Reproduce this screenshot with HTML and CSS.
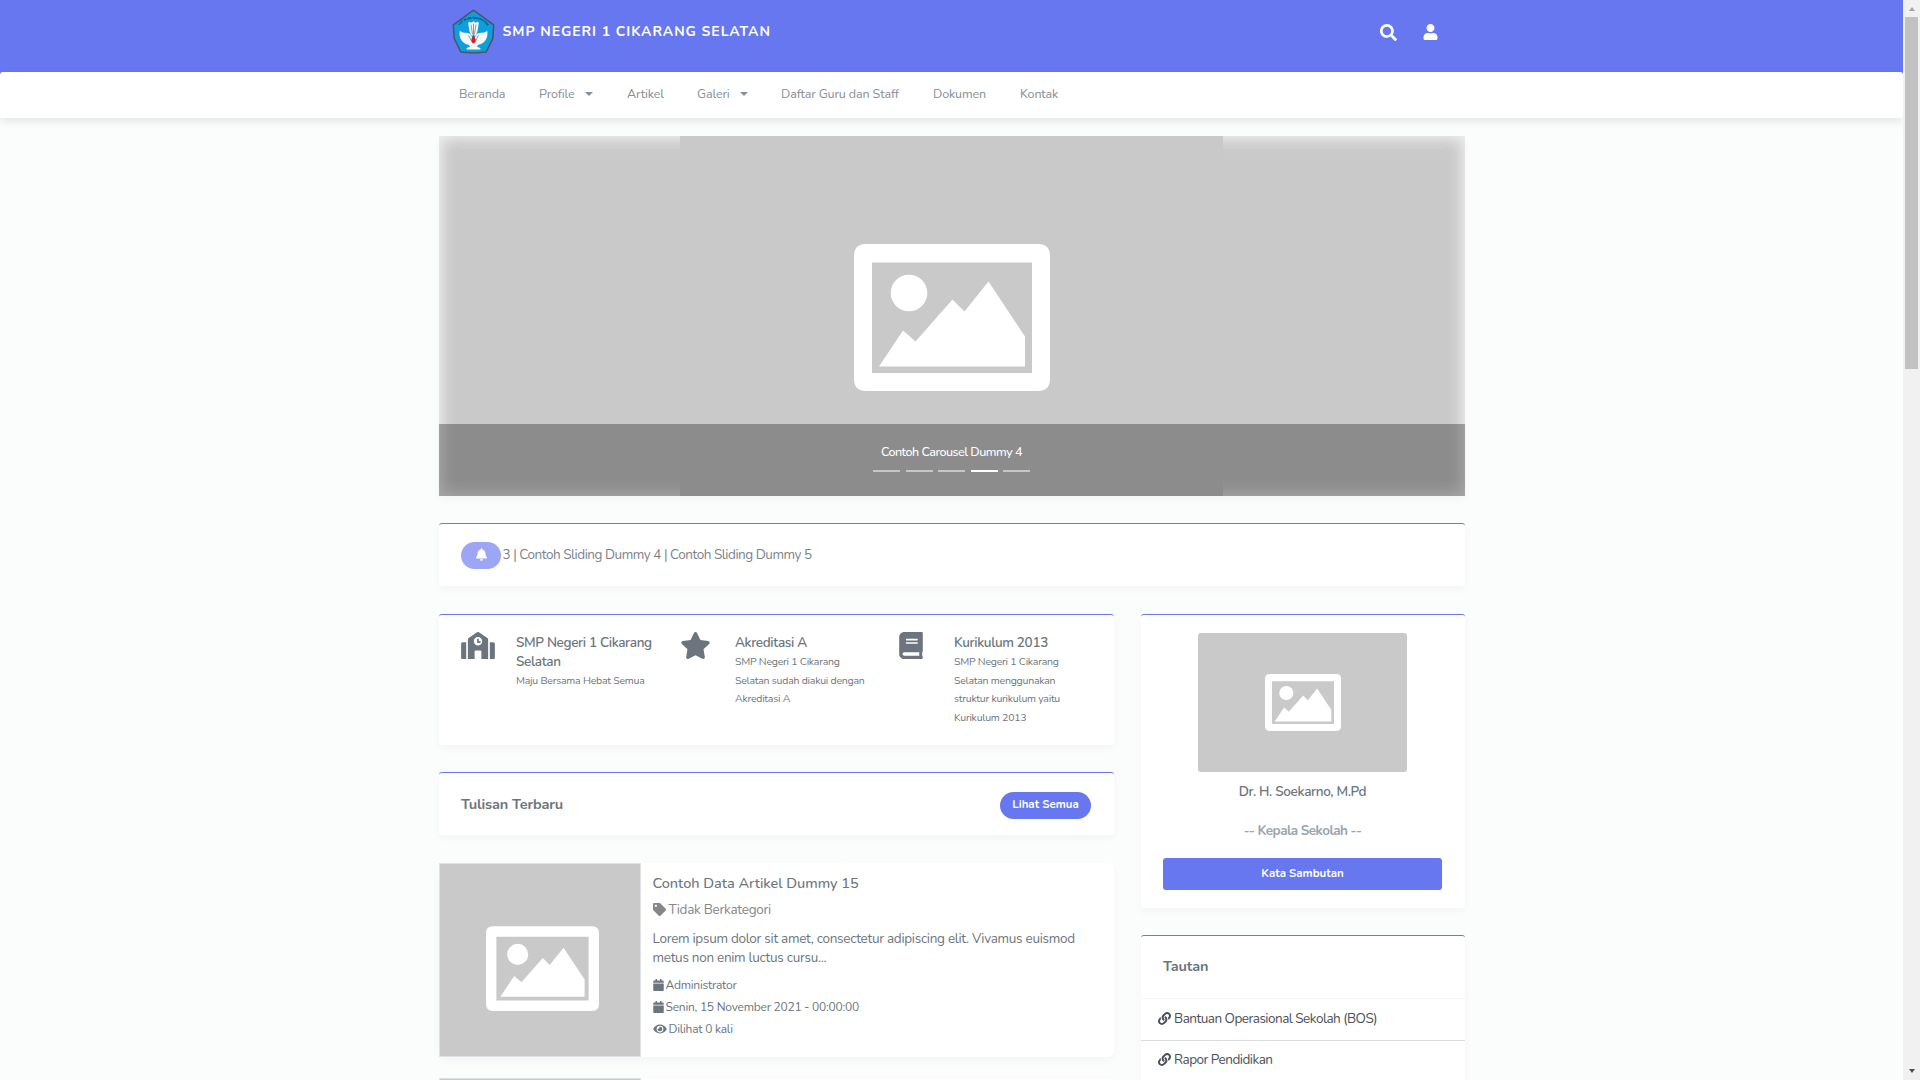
FILE: index.html
```html
<!DOCTYPE html>
<html lang="id">
<head>
<meta charset="utf-8">
<title>SMP Negeri 1 Cikarang Selatan</title>
<link rel="stylesheet" href="styles.css">
</head>
<body>
<svg class="defs" width="0" height="0">
  <symbol id="placeholder" viewBox="0 0 196 147">
    <path fill="#fff" fill-rule="evenodd" d="M12 0H184Q196 0 196 12V135Q196 147 184 147H12Q0 147 0 135V12Q0 0 12 0ZM18 18.500V129H178V18.500Z"/>
    <circle cx="55" cy="49" r="18.300" fill="#fff"/>
    <path fill="#fff" d="M25 122.500 49 86.500 61.500 97.500 98.500 55.500 110.500 67.500 134.500 37.500 171 92.500V122.500Z"/>
  </symbol>
  <symbol id="calendar" viewBox="0 0 448 512"><path d="M12 192h424c6.600 0 12 5.400 12 12v260c0 26.500-21.500 48-48 48H48c-26.500 0-48-21.500-48-48V204c0-6.600 5.400-12 12-12zm436-44v-36c0-26.500-21.500-48-48-48h-48V12c0-6.600-5.400-12-12-12h-40c-6.600 0-12 5.400-12 12v52H160V12c0-6.600-5.400-12-12-12h-40c-6.600 0-12 5.400-12 12v52H48C21.500 64 0 85.500 0 112v36c0 6.600 5.400 12 12 12h424c6.600 0 12-5.400 12-12z"/></symbol>
  <symbol id="link" viewBox="0 0 512 512"><path d="M326.612 185.391c59.747 59.809 58.927 155.698.36 214.590-.11.12-.24.25-.36.37l-67.200 67.200c-59.270 59.270-155.699 59.262-214.960 0-59.270-59.260-59.270-155.700 0-214.960l37.106-37.106c9.840-9.840 26.786-3.300 27.294 10.606.648 17.722 3.826 35.527 9.690 52.721 1.986 5.822.567 12.262-3.783 16.612l-13.087 13.087c-28.026 28.026-28.905 73.660-1.155 101.960 28.024 28.579 74.086 28.749 102.325.51l67.200-67.190c28.191-28.191 28.073-73.757 0-101.830-3.701-3.694-7.429-6.564-10.341-8.569a16.037 16.037 0 0 1-6.947-12.606c-.396-10.567 3.348-21.456 11.698-29.806l21.054-21.055c5.521-5.521 14.182-6.199 20.584-1.731a152.482 152.482 0 0 1 20.522 17.197zM467.547 44.449c-59.261-59.262-155.690-59.270-214.960 0l-67.200 67.200c-.12.12-.25.25-.36.37-58.566 58.892-59.387 154.781.36 214.590a152.454 152.454 0 0 0 20.521 17.196c6.402 4.468 15.064 3.789 20.584-1.731l21.054-21.055c8.350-8.350 12.094-19.239 11.698-29.806a16.037 16.037 0 0 0-6.947-12.606c-2.912-2.005-6.640-4.875-10.341-8.569-28.073-28.073-28.191-73.639 0-101.830l67.200-67.190c28.239-28.239 74.300-28.069 102.325.51 27.750 28.300 26.872 73.934-1.155 101.960l-13.087 13.087c-4.350 4.350-5.769 10.790-3.783 16.612 5.864 17.194 9.042 34.999 9.690 52.721.509 13.906 17.454 20.446 27.294 10.606l37.106-37.106c59.271-59.259 59.271-155.699.001-214.959z"/></symbol>
</svg>
<div class="window">
<div class="page">
  <header class="topbar">
    <div class="container topbar-inner">
      <svg class="logo" viewBox="0 0 44 46">
        <path d="M22 1.200 42.600 16.200 41.800 30 35 44 22 45 9 44 2.200 30 1.400 16.200Z" fill="#0c9fe0" stroke="#4a5568" stroke-width="1.600" stroke-linejoin="round"/>
        <path id="arc" d="M6.500 20.500C10 6.500 34 6.500 37.500 20.500" fill="none"/>
        <text class="logo-text"><textPath href="#arc" startOffset="50%" text-anchor="middle">TUT WURI HANDAYANI</textPath></text>
        <path fill="#f4f8f8" d="M16.500 14 18 13 19.500 14 22 12.500 24.500 14 26 13 27.500 14 26 23 24.500 27H19.500L18 23ZM8 22C10 25 15 24 18 25L22 31 26 25C29 24 34 25 36 22 37.500 30 33 36 27 36.500L25.500 38.500 29 40V41.500H15V40L18.500 38.500 17 36.500C11 36 6.500 30 8 22Z"/>
        <path d="M22 15V28M19.500 16 21 26M24.500 16 23 26M17 27 20 33M27 27 24 33" stroke="#555" stroke-width=".6" fill="none"/>
        <path fill="#e01b24" d="M22 27C25 30.500 25 34.500 22 35 19 34.500 19 30.500 22 27Z"/>
      </svg>
      <span class="brand">SMP NEGERI 1 CIKARANG SELATAN</span>
      <div class="tools">
        <svg class="ico-search" viewBox="0 0 512 512"><path d="M505 442.700L405.300 343c-4.500-4.500-10.600-7-17-7H372c27.600-35.300 44-79.700 44-128C416 93.100 322.900 0 208 0S0 93.100 0 208s93.100 208 208 208c48.300 0 92.700-16.400 128-44v16.300c0 6.400 2.500 12.500 7 17l99.700 99.700c9.400 9.400 24.600 9.400 33.900 0l28.300-28.300c9.400-9.400 9.400-24.600.1-34zM208 336c-70.700 0-128-57.200-128-128 0-70.700 57.200-128 128-128 70.700 0 128 57.200 128 128 0 70.700-57.200 128-128 128z"/></svg>
        <svg class="ico-user" viewBox="0 0 448 512"><path d="M224 256c70.700 0 128-57.300 128-128S294.700 0 224 0 96 57.300 96 128s57.300 128 128 128zm89.600 32h-16.700c-22.200 10.200-46.900 16-72.900 16s-50.600-5.800-72.900-16h-16.700C60.200 288 0 348.200 0 422.400V464c0 26.500 21.500 48 48 48h352c26.500 0 48-21.500 48-48v-41.600c0-74.200-60.200-134.400-134.400-134.400z"/></svg>
      </div>
    </div>
  </header>
  <nav class="navbar">
    <div class="container nav-list">
      <a class="nav-1">Beranda</a>
      <a class="nav-2">Profile<i class="caret"></i></a>
      <a class="nav-3">Artikel</a>
      <a class="nav-4">Galeri<i class="caret"></i></a>
      <a class="nav-5">Daftar Guru dan Staff</a>
      <a class="nav-6">Dokumen</a>
      <a class="nav-7">Kontak</a>
    </div>
  </nav>
  <main class="container content">
    <section class="carousel">
      <div class="slide"><svg class="slide-icon"><use href="#placeholder"/></svg></div>
      <div class="caption">
        <span class="caption-text">Contoh Carousel Dummy 4</span>
        <div class="dots"><i></i><i></i><i></i><i class="on"></i><i></i></div>
      </div>
    </section>
    <section class="card ticker">
      <span class="bell"><svg viewBox="0 0 448 512"><path d="M224 512c35.320 0 63.970-28.650 63.970-64H160.030c0 35.350 28.650 64 63.970 64zm215.390-149.710c-19.320-20.760-55.470-51.990-55.470-154.290 0-77.700-54.480-139.900-127.940-155.160V32c0-17.670-14.320-32-31.980-32s-31.980 14.330-31.980 32v20.840C118.560 68.100 64.080 130.300 64.080 208c0 102.300-36.150 133.530-55.470 154.290-6 6.450-8.660 14.160-8.610 21.710.11 16.400 12.980 32 32.100 32h383.800c19.120 0 32-15.600 32.100-32 .05-7.550-2.610-15.270-8.610-21.710z"/></svg></span>
      <span class="ticker-text">3 | Contoh Sliding Dummy 4 | Contoh Sliding Dummy 5</span>
    </section>
    <div class="columns">
      <div class="main-col">
        <section class="card info">
          <div class="feature">
            <svg class="feature-icon" viewBox="0 0 640 512"><path d="M0 224v272c0 8.840 7.160 16 16 16h80V192H32c-17.670 0-32 14.330-32 32zm360-48h-24v-40c0-4.420-3.580-8-8-8h-16c-4.420 0-8 3.580-8 8v64c0 4.420 3.580 8 8 8h48c4.420 0 8-3.580 8-8v-16c0-4.420-3.580-8-8-8zm137.750-63.960l-160-106.670a32.020 32.020 0 0 0-35.500 0l-160 106.670A32.002 32.002 0 0 0 128 138.660V512h128V368c0-8.840 7.160-16 16-16h96c8.840 0 16 7.160 16 16v144h128V138.670c0-10.700-5.350-20.690-14.250-26.630zM320 256c-44.180 0-80-35.820-80-80s35.820-80 80-80 80 35.820 80 80-35.820 80-80 80zm288-64h-64v320h80c8.840 0 16-7.160 16-16V224c0-17.670-14.330-32-32-32z"/></svg>
            <div class="feature-body">
              <h3>SMP Negeri 1 Cikarang<br>Selatan</h3>
              <p>Maju Bersama Hebat Semua</p>
            </div>
          </div>
          <div class="feature">
            <svg class="feature-icon star" viewBox="0 0 576 512"><path d="M259.300 17.800L194 150.200 47.900 171.500c-26.200 3.800-36.700 36.100-17.700 54.600l105.700 103-25 145.500c-4.500 26.300 23.200 46 46.400 33.700L288 439.600l130.700 68.700c23.200 12.200 50.900-7.400 46.400-33.700l-25-145.500 105.700-103c19-18.500 8.500-50.800-17.700-54.600L382 150.200 316.700 17.800c-11.700-23.600-45.600-23.900-57.400 0z"/></svg>
            <div class="feature-body">
              <h3>Akreditasi A</h3>
              <p>SMP Negeri 1 Cikarang<br>Selatan sudah diakui dengan<br>Akreditasi A</p>
            </div>
          </div>
          <div class="feature">
            <svg class="feature-icon book" viewBox="0 0 448 512"><path d="M448 360V24c0-13.300-10.700-24-24-24H96C43 0 0 43 0 96v320c0 53 43 96 96 96h328c13.300 0 24-10.700 24-24v-16c0-7.500-3.500-14.300-8.900-18.700-4.200-15.400-4.200-59.300 0-74.700 5.400-4.300 8.900-11.100 8.900-18.600zM128 134c0-3.300 2.700-6 6-6h212c3.300 0 6 2.700 6 6v20c0 3.300-2.700 6-6 6H134c-3.300 0-6-2.700-6-6v-20zm0 64c0-3.300 2.700-6 6-6h212c3.300 0 6 2.700 6 6v20c0 3.300-2.700 6-6 6H134c-3.300 0-6-2.700-6-6v-20zm253.400 250H96c-17.700 0-32-14.300-32-32 0-17.600 14.400-32 32-32h285.400c-1.900 17.100-1.900 46.900 0 64z"/></svg>
            <div class="feature-body">
              <h3>Kurikulum 2013</h3>
              <p>SMP Negeri 1 Cikarang<br>Selatan menggunakan<br>struktur kurikulum yaitu<br>Kurikulum 2013</p>
            </div>
          </div>
        </section>
        <section class="card heading">
          <h2>Tulisan Terbaru</h2>
          <a class="pill">Lihat Semua</a>
        </section>
        <article class="post">
          <div class="thumb"><svg class="thumb-icon"><use href="#placeholder"/></svg></div>
          <div class="post-body">
            <h3 class="post-title">Contoh Data Artikel Dummy 15</h3>
            <div class="post-cat"><svg viewBox="0 0 512 512"><path d="M0 252.118V48C0 21.490 21.490 0 48 0h204.118a48 48 0 0 1 33.941 14.059l211.882 211.882c18.745 18.745 18.745 49.137 0 67.882L293.823 497.941c-18.745 18.745-49.137 18.745-67.882 0L14.059 286.059A48 48 0 0 1 0 252.118zM112 64c-26.510 0-48 21.490-48 48s21.490 48 48 48 48-21.490 48-48-21.490-48-48-48z"/></svg>Tidak Berkategori</div>
            <p class="post-text">Lorem ipsum dolor sit amet, consectetur adipiscing elit. Vivamus euismod<br>metus non enim luctus cursu...</p>
            <div class="meta"><svg class="cal"><use href="#calendar"/></svg>Administrator</div>
            <div class="meta"><svg class="cal"><use href="#calendar"/></svg>Senin, 15 November 2021 - 00:00:00</div>
            <div class="meta"><svg class="eye" viewBox="0 0 576 512"><path d="M572.520 241.400C518.290 135.590 410.930 64 288 64S57.680 135.640 3.480 241.410a32.350 32.350 0 0 0 0 29.190C57.710 376.410 165.070 448 288 448s230.320-71.640 284.520-177.410a32.350 32.350 0 0 0 0-29.190zM288 400a144 144 0 1 1 144-144 143.930 143.930 0 0 1-144 144zm0-240a95.310 95.310 0 0 0-25.310 3.790 47.850 47.850 0 0 1-66.900 66.900A95.780 95.780 0 1 0 288 160z"/></svg>Dilihat 0 kali</div>
          </div>
        </article>
        <article class="post next"><div class="thumb"></div></article>
      </div>
      <aside class="side-col">
        <section class="card profile">
          <div class="portrait"><svg class="portrait-icon"><use href="#placeholder"/></svg></div>
          <h3>Dr. H. Soekarno, M.Pd</h3>
          <h4>-- Kepala Sekolah --</h4>
          <a class="button">Kata Sambutan</a>
        </section>
        <section class="card links">
          <h2>Tautan</h2>
          <a class="link"><svg><use href="#link"/></svg>Bantuan Operasional Sekolah (BOS)</a>
          <a class="link"><svg><use href="#link"/></svg>Rapor Pendidikan</a>
        </section>
      </aside>
    </div>
  </main>
</div>
<div class="scrollbar"><i class="up"></i><i class="grip"></i><i class="down"></i></div>
</div>
</body>
</html>
```
FILE: styles.css
```css
* { box-sizing: border-box; }
html, body { margin: 0; height: 1080px; overflow: hidden; }
body { font-family: Nunito, "Lato", sans-serif; font-size: 13.5px; color: #6c757d; background: #fafdfb; }
h2, h3, h4, p { margin: 0; }
svg { display: block; flex: none; fill: currentColor; }
.defs { position: absolute; }
.window { display: flex; height: 1080px; }
.page { width: 1903px; height: 1080px; overflow: hidden; }
.container { width: 1026px; margin-left: 439px; }

/* header */
.topbar { height: 75px; margin-bottom: -3px; background: #6777ef; color: #fff; }
.topbar-inner { display: flex; padding: 9px 27px 0 13px; }
.logo { width: 43px; height: 45px; overflow: visible; }
.logo-text { font-size: 2.9px; font-weight: 700; fill: #123; }
.brand { margin-left: 7.5px; padding-top: 13px; font-size: 14px; font-weight: 700; line-height: 20px; letter-spacing: .95px; white-space: nowrap; }
.tools { display: flex; gap: 26px; margin-left: auto; padding-top: 15px; }
.ico-search { width: 17px; height: 17px; }
.ico-user { width: 15px; height: 16px; }
.navbar { height: 46px; border-radius: 3px; background: #fff; box-shadow: 0 4px 8px rgba(0,0,0,.09); }
.nav-list { display: flex; padding-left: 20px; color: #868e96; font-size: 12.5px; letter-spacing: -.12px; line-height: 44px; }
.nav-list a { display: flex; align-items: center; white-space: nowrap; }
.caret { width: 0; height: 0; margin-left: 10px; border: 4px solid transparent; border-top: 4px solid currentColor; border-bottom: 0; }
.nav-1 { width: 80px; }
.nav-2 { width: 88px; }
.nav-3 { width: 70px; }
.nav-4 { width: 84px; }
.nav-5 { width: 152px; }
.nav-6 { width: 87px; }

/* carousel */
.content { padding-top: 18px; }
.carousel { position: relative; display: flex; flex-direction: column; height: 360px; background: #c9c9c9; box-shadow: 0 4px 8px rgba(0,0,0,.03); }
.carousel::before { content: ""; position: absolute; inset: 0; box-shadow: inset 0 0 16px 2px rgba(252,252,252,.85); }
.slide { position: relative; flex: none; width: 543px; height: 360px; margin-left: 241px; padding: 107.5px 0 0 173.5px; background: #c9c9c9; }
.slide-icon { width: 196px; height: 147px; }
.caption { position: relative; flex: none; display: flex; flex-direction: column; align-items: center; height: 72px; margin-top: -72px; padding: 18px 1px 0 0; background: rgba(0,0,0,.3); color: #fff; }
.caption-text { font-size: 12.5px; font-weight: 500; line-height: 20px; letter-spacing: -.48px; }
.dots { display: flex; gap: 5.5px; margin-top: 8px; }
.dots i { width: 27px; height: 2px; background: rgba(255,255,255,.5); }
.dots .on { background: #fff; }

/* cards */
.card { background: #fff; border-radius: 3px; border-top: 1px solid #6777ef; box-shadow: 0 4px 8px rgba(0,0,0,.03); }
.ticker { display: flex; height: 63px; margin-top: 27px; padding: 18px 22px; }
.bell { display: flex; justify-content: center; width: 40px; height: 27px; padding-top: 6px; border-radius: 14px; background: #9ca6f5; color: #fff; }
.bell svg { width: 11px; height: 13px; }
.ticker-text { margin-left: 1.5px; color: #7b838a; line-height: 25px; letter-spacing: -.46px; white-space: nowrap; }
.columns { display: flex; gap: 27px; margin-top: 28px; }
.main-col { width: 675px; }
.side-col { width: 324px; }
.info { display: flex; height: 131px; padding: 17px 0 0 22px; }
.feature { display: flex; flex: none; width: 219px; }
.feature-icon { width: 34px; height: 27px; margin-right: 21px; }
.feature-icon.star { width: 31px; margin-right: 24px; }
.feature-icon.book { width: 24px; margin-right: 31px; }
.feature h3 { padding-top: 1px; font-size: 13.5px; font-weight: 600; line-height: 19px; letter-spacing: -.34px; white-space: nowrap; }
.feature p { margin-top: 1px; font-size: 10.5px; line-height: 18.7px; letter-spacing: -.23px; white-space: nowrap; }
h2 { font-size: 14.5px; font-weight: 700; line-height: 25px; letter-spacing: -.14px; white-space: nowrap; }
.heading { display: flex; justify-content: space-between; height: 63px; margin-top: 27px; padding: 19px 23px 0 22px; }
.pill { width: 91px; height: 27px; border-radius: 14px; background: #6777ef; color: #fff; font-size: 11.5px; font-weight: 700; line-height: 25px; text-align: center; white-space: nowrap; }

/* articles */
.post { display: flex; height: 194px; margin-top: 28px; background: #fff; border-radius: 6px; box-shadow: 0 4px 8px rgba(0,0,0,.03); }
.post.next { margin-top: 21px; }
.thumb { width: 202px; padding: 62px 0 0 46px; background: #c9c9c9; border: 1px solid #dee2e6; }
.thumb-icon { width: 113px; height: 85px; }
.post-body { padding: 9px 0 0 11.5px; white-space: nowrap; }
.post-title { font-size: 14.5px; font-weight: 500; line-height: 22px; letter-spacing: -.03px; }
.post-cat { display: flex; align-items: center; gap: 3px; margin-top: 5px; color: #868686; line-height: 21px; letter-spacing: -.27px; }
.post-cat svg { width: 13px; height: 13px; }
.post-text { margin-top: 9px; line-height: 19px; letter-spacing: -.285px; }
.meta { display: flex; align-items: center; gap: 2px; height: 22px; font-size: 12px; letter-spacing: -.23px; }
.post-text + .meta { margin-top: 7px; }
.cal { width: 11px; height: 12px; }
.eye { width: 14px; height: 12px; }

/* sidebar */
.profile { display: flex; flex-direction: column; align-items: center; height: 294px; padding: 18px 23px 0 22px; }
.portrait { display: flex; align-items: center; justify-content: center; width: 209px; height: 139px; border-radius: 3px; background: #c9c9c9; }
.portrait-icon { width: 76px; height: 57px; }
.profile h3 { margin-top: 10px; font-size: 13.5px; font-weight: 600; line-height: 20px; letter-spacing: -.32px; }
.profile h4 { margin-top: 19px; color: #98a6ad; font-size: 13.5px; font-weight: 700; line-height: 20px; letter-spacing: -.52px; }
.button { width: 279px; height: 32px; margin-top: 17px; border-radius: 3px; background: #6777ef; color: #fff; font-size: 11.5px; font-weight: 700; line-height: 31px; text-align: center; }
.links { height: 200px; margin-top: 27px; }
.links h2 { height: 63px; padding: 18px 22px 0; border-bottom: 1px solid #f6f6f6; }
.link { display: flex; align-items: center; gap: 3px; height: 42px; padding: 0 0 3px 17px; border-bottom: 1px solid #dcdcdc; color: #495057; letter-spacing: -.5px; white-space: nowrap; }
.link + .link { padding-bottom: 5px; }
.link svg { width: 13px; height: 13px; }

.scrollbar { display: flex; flex-direction: column; align-items: center; width: 17px; background: #f1f1f1; }
.up { margin-top: 7px; border: 3.5px solid transparent; border-bottom: 4px solid #a3a3a3; border-top: 0; }
.grip { width: 13px; height: 352px; margin-top: 6px; background: #c1c1c1; }
.down { margin-top: auto; margin-bottom: 7px; border: 3.5px solid transparent; border-top: 4px solid #505050; border-bottom: 0; }
```
